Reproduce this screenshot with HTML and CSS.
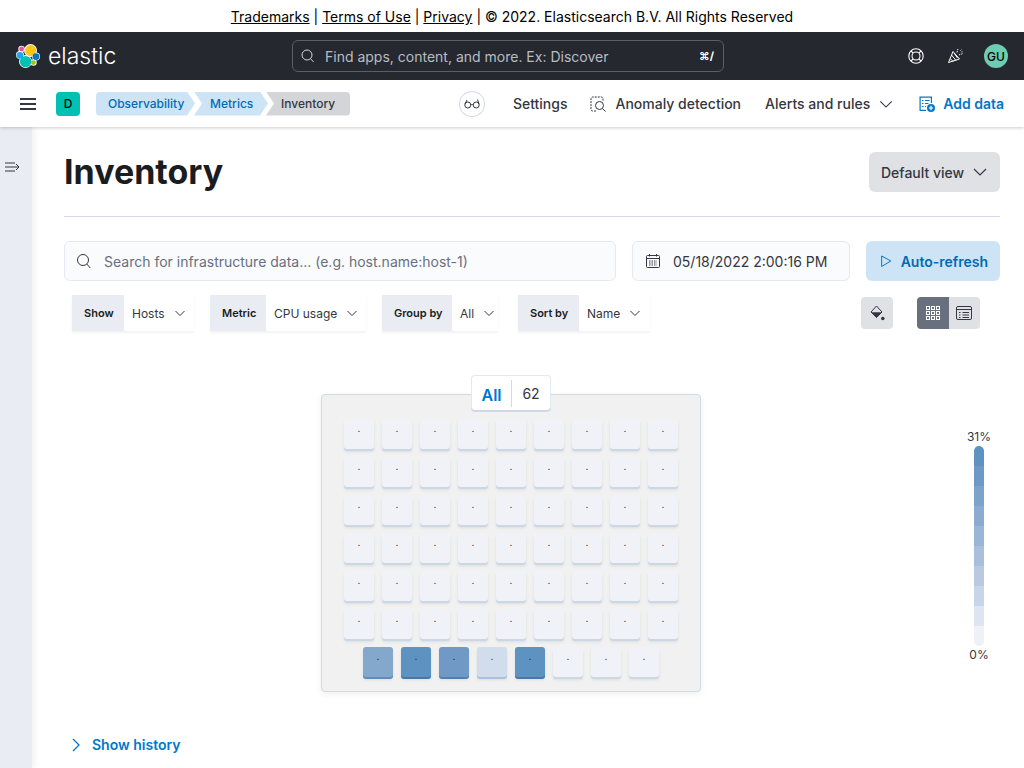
FILE: index.html
```html
<!DOCTYPE html>
<html lang="en">
<head>
<meta charset="utf-8">
<title>Inventory - Elastic</title>
<link rel="stylesheet" href="styles.css">
</head>
<body>
<div class="legal"><a href="#">Trademarks</a> | <a href="#">Terms of Use</a> | <a href="#">Privacy</a> | © 2022. Elasticsearch B.V. All Rights Reserved</div>

<header class="topbar">
  <div class="brand">
    <svg class="logo" width="24" height="24" viewBox="0 0 24 24">
      <g fill="#fff"><circle cx="14.5" cy="6.5" r="6.5"/><circle cx="9.5" cy="17.5" r="6.5"/><circle cx="5.5" cy="5" r="3.2"/><circle cx="4" cy="11" r="4"/><circle cx="20" cy="12.5" r="4"/><circle cx="17.5" cy="18.5" r="3.2"/></g>
      <circle cx="14.6" cy="6.6" r="5.5" fill="#fec514"/>
      <circle cx="4" cy="11.3" r="3.4" fill="#1ba9f5"/>
      <circle cx="20" cy="12.6" r="3.4" fill="#0077cc"/>
      <circle cx="5.6" cy="5" r="2.4" fill="#f04e98"/>
      <circle cx="17.4" cy="18.6" r="2.4" fill="#93c90e"/>
      <circle cx="9.6" cy="17.6" r="5.7" fill="#00bfb3"/>
    </svg>
    <span class="wordmark">elastic</span>
  </div>
  <div class="global-search">
    <svg class="ico" width="16" height="16" viewBox="0 0 16 16" fill="none" stroke="#d4d7dd" stroke-width="1"><circle cx="7" cy="7" r="5"/><path d="M10.6 10.8l3 3.2"/></svg>
    <span class="global-text">Find apps, content, and more. Ex: Discover</span>
    <span class="kbd">⌘/</span>
  </div>
  <div class="top-icons">
    <svg width="16" height="16" viewBox="0 0 16 16" fill="none" stroke="#fff" stroke-width="1.1"><circle cx="8" cy="8" r="7.2"/><circle cx="8" cy="8" r="4"/><path d="M3 3l2.2 2.2M13 3l-2.2 2.2M3 13l2.2-2.2M13 13l-2.2-2.2"/></svg>
    <svg class="party" width="18" height="18" viewBox="0 0 18 18" fill="none" stroke="#fff" stroke-width="1"><path d="M6 4.5L1.5 15.5l11-3.5z"/><path d="M4.5 8l4.5 5.5M3.2 11.5l3 3.2M7 6l3.500 5"/><path d="M10 5.500c.6-1.200.2-2.300 1-3.500M12 8c1-.8 2.200-.8 3.500-1.300M13.500 3.500l.8-.8M14.500 5l1-.2" stroke-dasharray="1.500 1"/></svg>
    <span class="avatar">GU</span>
  </div>
</header>

<nav class="subnav">
  <svg class="burger" width="16" height="12" viewBox="0 0 16 12" fill="#343741"><rect width="16" height="2" y="0"/><rect width="16" height="2" y="5"/><rect width="16" height="2" y="10"/></svg>
  <span class="space">D</span>
  <div class="crumbs">
    <span class="crumb crumb-first">Observability</span>
    <span class="crumb crumb-mid">Metrics</span>
    <span class="crumb crumb-last">Inventory</span>
  </div>
  <div class="nav-right">
    <span class="beta"><svg width="16" height="10" viewBox="0 0 16 10" fill="none" stroke="#343741" stroke-width="1"><circle cx="3.800" cy="6" r="3"/><circle cx="12.200" cy="6" r="3"/><path d="M6.800 6c.8-.7 1.600-.7 2.400 0M1 5L3 1M15 5l-1.500-4.500"/></svg></span>
    <a class="nav-link settings">Settings</a>
    <a class="nav-link anomaly"><svg width="16" height="16" viewBox="0 0 16 16" fill="none" stroke="#343741" stroke-width="1"><path d="M6 15H2.500A1.500 1.500 0 0 1 1 13.500V2.500A1.500 1.500 0 0 1 2.500 1h9A1.500 1.500 0 0 1 13 2.500V5" stroke-dasharray="2 1"/><circle cx="9.500" cy="9.500" r="4"/><path d="M12.500 12.500L15.500 15.500"/></svg>Anomaly detection</a>
    <a class="nav-link alerts">Alerts and rules<svg width="14" height="14" viewBox="0 0 16 16" fill="none" stroke="#343741" stroke-width="1.300"><path d="M1.500 5l6.500 6.500L14.500 5"/></svg></a>
    <a class="nav-link add"><svg width="16" height="16" viewBox="0 0 16 16"><path fill="none" stroke="#0077cc" stroke-width="1.200" d="M7 14.400H1.100V1.100h11.300V7"/><path fill="none" stroke="#0077cc" stroke-width="1.200" d="M3 4.500h1.500M6 4.500h4.500M3 7.500h1.500M6 7.500h3.500M3 10.500h1.500M6 10.500h1"/><circle cx="12" cy="12" r="4" fill="#0077cc"/><path stroke="#fff" stroke-width="1.200" d="M12 9.800v4.400M9.800 12h4.400"/></svg>Add data</a>
  </div>
</nav>

<div class="shell">
  <aside class="rail">
    <svg width="16" height="16" viewBox="0 0 16 16" fill="none" stroke="#343741" stroke-width="1"><path d="M1 4h10M1 8h14M1 12h10M12 5l3 3-3 3"/></svg>
  </aside>
  <main class="page">
    <div class="page-head">
      <h1>Inventory</h1>
      <button class="view-btn">Default view<svg width="16" height="16" viewBox="0 0 16 16" fill="none" stroke="#343741" stroke-width="1.200"><path d="M2 5l6 6 6-6"/></svg></button>
    </div>
    <hr class="rule">
    <div class="query-row">
      <div class="field query">
        <svg width="16" height="16" viewBox="0 0 16 16" fill="none" stroke="#343741" stroke-width="1"><circle cx="7" cy="7" r="5.500"/><path d="M10.800 11l3.500 4"/></svg>
        <span>Search for infrastructure data... (e.g. host.name:host-1)</span>
      </div>
      <div class="field date">
        <svg width="16" height="16" viewBox="0 0 16 16" fill="none" stroke="#343741"><rect x="1.500" y="2.500" width="13" height="12" rx="1"/><path d="M1.500 5.500h13M4.500 1v2.500M11.500 1v2.500"/><path stroke-dasharray="1.500 1" d="M4 8h8M4 10h8M4 12h8"/></svg>
        <span>05/18/2022 2:00:16 PM</span>
      </div>
      <button class="refresh"><svg width="16" height="16" viewBox="0 0 16 16" fill="none" stroke="#006bb4" stroke-width="1"><path d="M4 2.500L14 8 4 14z"/></svg>Auto-refresh</button>
    </div>

    <div class="filters">
      <div class="filter f-show"><b>Show</b><span>Hosts</span><svg class="chev" width="12" height="12" viewBox="0 0 12 12" fill="none" stroke="#343741" stroke-width="1"><path d="M1.500 4l4.500 4.500L10.500 4"/></svg></div>
      <div class="filter f-metric"><b>Metric</b><span>CPU usage</span><svg class="chev" width="12" height="12" viewBox="0 0 12 12" fill="none" stroke="#343741" stroke-width="1"><path d="M1.500 4l4.500 4.500L10.500 4"/></svg></div>
      <div class="filter f-group"><b>Group by</b><span>All</span><svg class="chev" width="12" height="12" viewBox="0 0 12 12" fill="none" stroke="#343741" stroke-width="1"><path d="M1.500 4l4.500 4.500L10.500 4"/></svg></div>
      <div class="filter f-sort"><b>Sort by</b><span>Name</span><svg class="chev" width="12" height="12" viewBox="0 0 12 12" fill="none" stroke="#343741" stroke-width="1"><path d="M1.500 4l4.500 4.500L10.500 4"/></svg></div>
      <div class="tools">
        <span class="tool paint"><svg width="16" height="16" viewBox="0 0 16 16"><path d="M7.500 1L13 7l-5.500 5.500L2 7z" fill="none" stroke="#343741" stroke-width="1"/><path d="M2 7.300h11L7.500 12.800z" fill="#343741"/><circle cx="13.800" cy="13.500" r="1.800" fill="#343741"/></svg></span>
        <div class="toggle">
          <span class="tool active"><svg width="16" height="16" viewBox="0 0 16 16" fill="none" stroke="#fff"><rect x="1.500" y="1.500" width="3" height="3"/><rect x="6.500" y="1.500" width="3" height="3"/><rect x="11.500" y="1.500" width="3" height="3"/><rect x="1.500" y="6.500" width="3" height="3"/><rect x="6.500" y="6.500" width="3" height="3"/><rect x="11.500" y="6.500" width="3" height="3"/><rect x="1.500" y="11.500" width="3" height="3"/><rect x="6.500" y="11.500" width="3" height="3"/><rect x="11.500" y="11.500" width="3" height="3"/></svg></span>
          <span class="tool"><svg width="16" height="16" viewBox="0 0 16 16" fill="none" stroke="#343741"><rect x="0.500" y="1.500" width="15" height="13" rx="1.500"/><path d="M1 4.500h14M3 7.500h1.500M6.500 7.500H13M3 10h1.500M6.500 10H13M3 12.500h1.500M6.500 12.500H13"/></svg></span>
        </div>
      </div>
    </div>

    <div class="map-area">
      <div class="map-center">
        <section class="group">
          <div class="group-label"><span class="g-name">All</span><span class="g-count">62</span></div>
          <div class="tiles" id="tiles"></div>
        </section>
      </div>
      <div class="legend">
        <span class="legend-label">31%</span>
        <div class="legend-bar" id="legend"></div>
        <span class="legend-label">0%</span>
      </div>
    </div>

    <a class="history"><svg width="16" height="16" viewBox="0 0 16 16" fill="none" stroke="#0077cc" stroke-width="1.300"><path d="M5 2l6 6-6 6"/></svg>Show history</a>
  </main>
</div>
<script src="app.js"></script>
</body>
</html>
```
FILE: app.js
```js
var tiles = document.getElementById('tiles');
var special = ['t-b', 't-a', 't-c', 't-d', 't-a'];
for (var i = 0; i < 62; i++) {
  var t = document.createElement('div');
  t.className = 'tile ' + (i >= 54 && special[i - 54] ? special[i - 54] : '');
  t.textContent = '.';
  tiles.appendChild(t);
}
var legend = document.getElementById('legend');
['#5e92c0', '#6d9ac5', '#7ca3ca', '#8bacd0', '#9ab5d6', '#a9bfdc', '#b8c9e1', '#c8d4e7', '#dde5f0', '#eef1f6'].forEach(function (c) {
  var s = document.createElement('div');
  s.className = 'legend-step';
  s.style.backgroundColor = c;
  legend.appendChild(s);
});
```
FILE: styles.css
```css
* { box-sizing: border-box; }
html, body { margin: 0; height: 768px; overflow: hidden; }
body { font-family: Inter, "Liberation Sans", sans-serif; color: #343741; background: #fff; font-size: 14px; }
button { font-family: inherit; border: 0; cursor: pointer; }
a { color: inherit; text-decoration: none; }

.legal { height: 32px; line-height: 34px; text-align: center; font-size: 14px; color: #000; }
.legal a { text-decoration: underline; }

.topbar { height: 48px; background: #25282f; display: flex; align-items: center; padding: 0 16px; position: relative; }
.brand { display: flex; align-items: center; width: 276px; }
.logo { flex: none; }
.wordmark { color: #fff; font-size: 23px; font-weight: 300; margin-left: 8px; letter-spacing: 0; }
.global-search { width: 432px; height: 32px; border: 1px solid #5b5e66; border-radius: 6px; display: flex; align-items: center; padding: 0 9px 0 7px; color: #b8bcc4; }
.global-text { margin-left: 9px; flex: 1; white-space: nowrap; }
.kbd { font-size: 11px; font-weight: 700; color: #fff; }
.top-icons { margin-left: auto; display: flex; align-items: center; }
.party { margin-left: 23px; }
.avatar { width: 24px; height: 24px; border-radius: 50%; background: #6dccb1; color: #000; font-size: 12px; font-weight: 500; display: flex; align-items: center; justify-content: center; margin-left: 19px; }

.subnav { height: 47px; background: #fff; display: flex; align-items: center; padding: 0 20px; box-shadow: 0 1px 3px rgba(52,55,65,.25); position: relative; z-index: 2; }
.burger { flex: none; }
.space { width: 24px; height: 24px; border-radius: 4px; background: #00bfb3; color: #000; font-size: 12px; font-weight: 500; display: flex; align-items: center; justify-content: center; margin-left: 20px; }
.crumbs { display: flex; margin-left: 16px; font-size: 12px; font-weight: 500; }
.crumb { height: 24px; line-height: 24px; background: #cce4f5; color: #006bb4; white-space: nowrap; }
.crumb-first { width: 99px; padding-left: 12px; border-radius: 4px 0 0 4px; clip-path: polygon(0 0, 91px 0, 100% 50%, 91px 100%, 0 100%); }
.crumb-mid { width: 74px; padding-left: 16px; margin-left: -1px; clip-path: polygon(0 0, 66px 0, 100% 50%, 66px 100%, 0 100%, 8px 50%); }
.crumb-last { width: 84px; padding-left: 15px; margin-left: -2px; background: #d3d5d9; color: #343741; border-radius: 0 4px 4px 0; clip-path: polygon(0 0, 100% 0, 100% 100%, 0 100%, 8px 50%); }
.nav-right { margin-left: auto; display: flex; align-items: center; }
.beta { width: 24px; height: 24px; border-radius: 50%; box-shadow: 0 0 0 1px #d3dae6; display: flex; align-items: center; justify-content: center; margin-right: 29px; }
.nav-link { display: flex; align-items: center; font-weight: 500; white-space: nowrap; }
.settings { margin-right: 23px; }
.anomaly { margin-right: 24px; }
.anomaly svg { margin-right: 9px; }
.alerts svg { margin-left: 9px; }
.alerts { margin-right: 26px; }
.add { color: #0077cc; font-weight: 600; }
.add svg { margin-right: 8px; }

.shell { display: flex; height: 641px; }
.rail { width: 32px; flex: none; background: #e9edf3; padding: 32px 0 0 4px; box-shadow: 3px 0 5px rgba(52,55,65,.06); }
.page { flex: 1; padding: 25px 24px 0 32px; min-width: 0; }
.page-head { display: flex; justify-content: space-between; align-items: flex-start; }
h1 { margin: 0; font-size: 34px; line-height: 40px; font-weight: 700; color: #1a1c21; }
.view-btn { width: 131px; height: 40px; border-radius: 6px; background: #e0e1e5; color: #343741; font-size: 14px; font-weight: 500; display: flex; align-items: center; justify-content: space-between; padding: 0 12px; }
.rule { border: 0; border-top: 1px solid #d3dae6; margin: 24px 0; }
.query-row { display: flex; gap: 16px; }
.field { height: 40px; background: #fafbfd; border: 1px solid #e4e8f1; border-radius: 6px; display: flex; align-items: center; padding: 0 11px; font-size: 14px; }
.query { flex: 1; color: #69707d; }
.query svg { margin-right: 12px; }
.date { width: 218px; padding-left: 12px; }
.date svg { margin-right: 12px; }
.refresh { width: 134px; height: 40px; border-radius: 6px; background: #cce4f5; color: #006bb4; font-size: 14px; font-weight: 600; display: flex; align-items: center; padding: 0 12px; gap: 8px; white-space: nowrap; }

.filters { display: flex; align-items: center; margin: 14px 20px 0 8px; }
.filter { height: 36px; display: flex; align-items: center; font-size: 12px; box-shadow: 0 2px 2px rgba(52,55,65,.06); margin-right: 16px; background: #fff; white-space: nowrap; }
.filter b { height: 36px; line-height: 36px; background: #e9edf3; font-size: 11px; font-weight: 600; color: #1a1c21; padding: 0 12px; }
.filter span { margin-left: 8px; }
.chev { margin-left: 9px; }
.f-show { width: 122px; } .f-show b { width: 52px; }
.f-metric { width: 156px; } .f-metric b { width: 56px; }
.f-group { width: 116px; margin-right: 20px; } .f-group b { width: 70px; }
.f-sort { width: 132px; } .f-sort b { width: 61px; }
.tools { margin-left: auto; display: flex; gap: 24px; }
.tool { width: 32px; height: 32px; background: #e0e1e5; display: flex; align-items: center; justify-content: center; }
.paint { border-radius: 4px; }
.toggle { display: flex; width: 63px; border-radius: 4px; overflow: hidden; }
.toggle .tool { flex: 1; }
.active { background: #69707d; }

.map-area { display: grid; grid-template-columns: 1fr 42px; margin-top: 63px; }
.map-center { display: flex; justify-content: center; }
.group { position: relative; width: 380px; height: 298px; background: #f1f1f1; border: 1px solid #d3dae6; border-radius: 4px; box-shadow: 0 2px 6px rgba(52,55,65,.08); padding: 24px 21px 0; }
.group-label { position: absolute; top: -20px; left: 149px; width: 80px; height: 35px; background: #fff; border: 1px solid #e4e8f1; border-bottom: 0; border-radius: 4px; box-shadow: 0 2px 0 #cfd8e6; display: flex; align-items: center; }
.g-name { width: 40px; text-align: center; font-size: 16px; font-weight: 600; color: #0077cc; border-right: 1px solid #d3dae6; height: 27px; line-height: 30px; }
.g-count { flex: 1; text-align: center; font-size: 14px; }
.tiles { display: flex; flex-wrap: wrap; justify-content: center; gap: 8px; }
.tile { width: 30px; height: 30px; background: #f0f2f7; border-radius: 3px; box-shadow: 0 2px 0 #ccd7e6, 0 3px 3px rgba(52,55,65,.1); font-size: 10px; line-height: 19px; text-align: center; color: #1a1c21; }
.t-a { background: #5e92c0; box-shadow: 0 2px 0 #4778a8, 0 3px 3px rgba(52,55,65,.1); }
.t-b { background: #84a7cc; box-shadow: 0 2px 0 #5e8cbc, 0 3px 3px rgba(52,55,65,.1); }
.t-c { background: #7199c5; box-shadow: 0 2px 0 #4f80b4, 0 3px 3px rgba(52,55,65,.1); }
.t-d { background: #d2ddec; box-shadow: 0 2px 0 #adc0db, 0 3px 3px rgba(52,55,65,.1); }

.legend { display: flex; flex-direction: column; align-items: center; padding-top: 35px; font-size: 12px; }
.legend-label { line-height: 15px; color: #343741; }
.legend-bar { width: 10px; height: 200px; border-radius: 5px; overflow: hidden; display: flex; flex-direction: column; margin: 2px 0 1px; }
.legend-step { flex: 1; }

.history { display: flex; align-items: center; gap: 8px; color: #0077cc; font-weight: 600; margin: 44px 0 0 4px; }
```
